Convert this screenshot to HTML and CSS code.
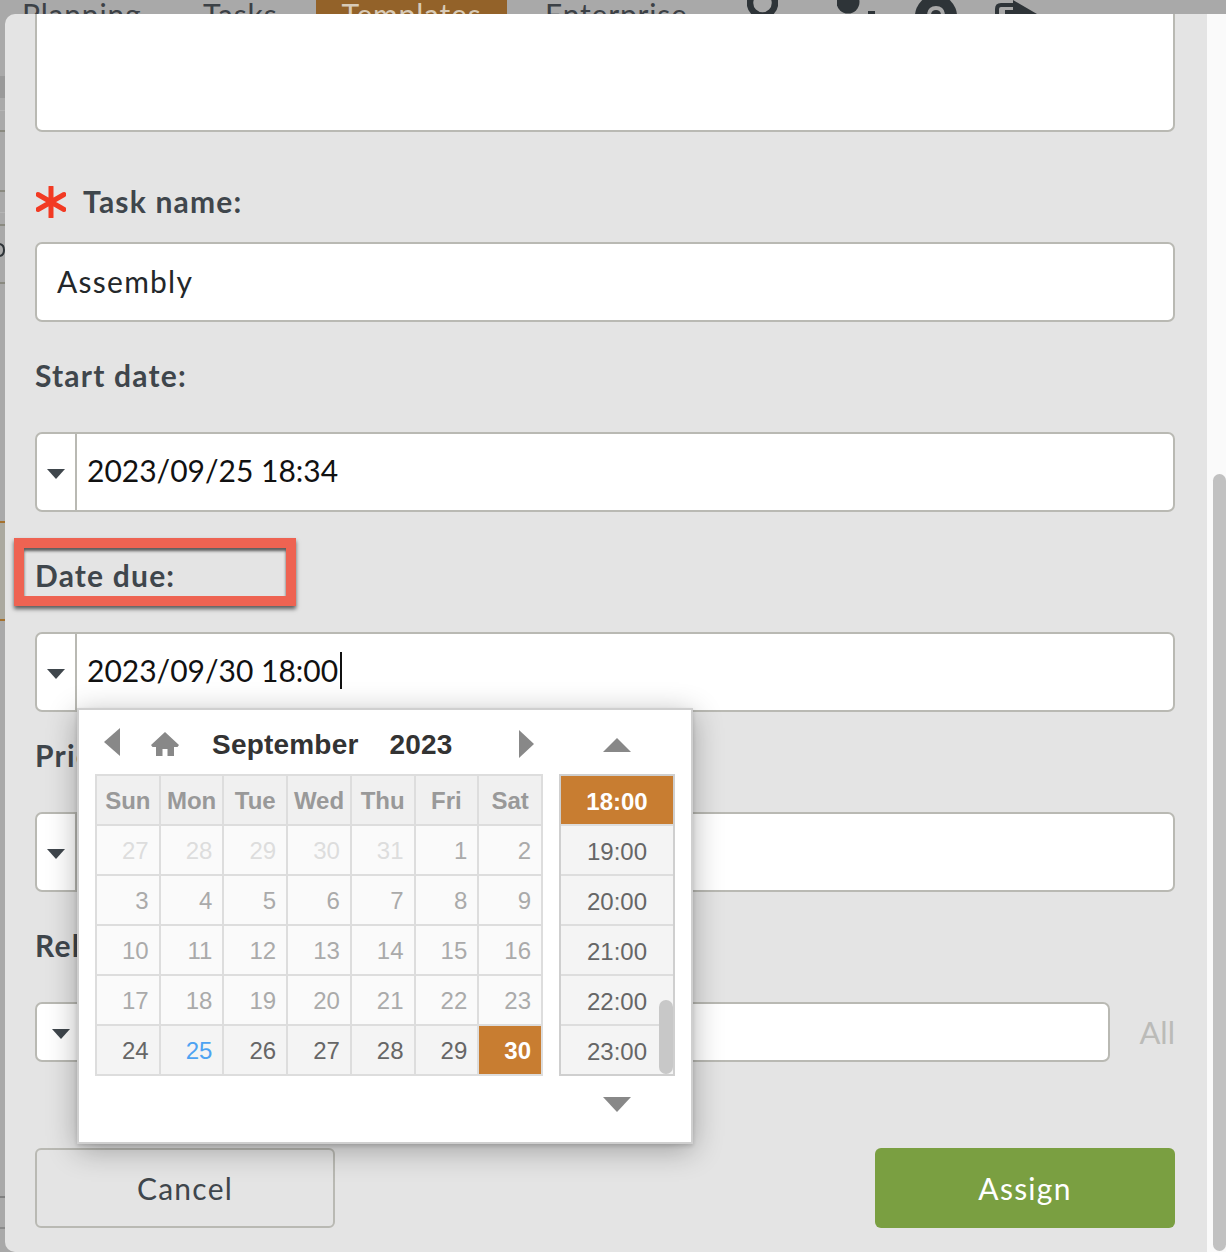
FILE: index.html
```html
<!DOCTYPE html>
<html lang="en">
<head>
    <meta charset="UTF-8">
    <title>Assign task</title>
    <link rel="stylesheet" href="styles.css">
</head>
<body>
    <div class="topbar">
        <a class="nav-item nav-planning">Planning</a>
        <a class="nav-item nav-tasks">Tasks</a>
        <a class="nav-item nav-templates">Templates</a>
        <a class="nav-item nav-enterprise">Enterprise</a>
        <svg class="nav-icon icon-search" width="31" height="14" viewBox="0 0 31 14"><circle cx="15.500" cy="3" r="12.500" fill="none" stroke="#2e3438" stroke-width="6.500"/></svg>
        <svg class="nav-icon icon-user" width="38" height="14" viewBox="0 0 38 14"><circle cx="11" cy="2" r="11.500" fill="#2e3438"/><rect x="31" y="11" width="7" height="3" fill="#2e3438"/></svg>
        <svg class="nav-icon icon-help" width="42" height="14" viewBox="0 0 42 14"><circle cx="21" cy="16" r="21" fill="#2e3438"/><path d="M14 14q1-6 7-6t7 6" fill="none" stroke="#a9a9a9" stroke-width="4"/></svg>
        <svg class="nav-icon icon-share" width="42" height="14" viewBox="0 0 42 14"><path d="M2 14V9q0-4 4-4h12" fill="none" stroke="#2e3438" stroke-width="4"/><path d="M18 0 42 14H10v-4h8z" fill="#2e3438"/></svg>
    </div>

    <div class="stage">
        <svg class="backdrop" width="5" height="1238" viewBox="0 0 5 1238">
            <rect y="62" width="5" height="22" fill="#999"/>
            <rect y="96" width="5" height="1" fill="#b4b4b4"/>
            <rect y="116" width="5" height="2" fill="#8a8a80"/>
            <rect y="176" width="5" height="2" fill="#8a8a80"/>
            <rect y="198" width="5" height="1" fill="#b4b4b4"/>
            <rect y="210" width="5" height="2" fill="#8a8a80"/>
            <path d="M0 230q4 1 4 6t-4 6" fill="none" stroke="#2e3438" stroke-width="2"/>
            <rect y="268" width="5" height="2" fill="#8a8a80"/>
            <rect y="507" width="5" height="99" fill="#aba99f"/>
            <rect y="507" width="5" height="2" fill="#a5712d"/>
            <rect y="605" width="5" height="2" fill="#a5712d"/>
            <rect y="1182" width="5" height="2" fill="#808080"/>
            <rect y="1213" width="5" height="2" fill="#8a8a8a"/>
        </svg>

        <div class="modal">
            <div class="box box-note"></div>

            <div class="label label-task">
                <svg class="required" width="30" height="32" viewBox="0 0 30 32"><path d="M15 1v30M2 8.500l26 15M28 8.500l-26 15" fill="none" stroke="#f23a23" stroke-width="5" stroke-linecap="round"/></svg>
                Task name:
            </div>
            <div class="box box-text">Assembly</div>

            <div class="label label-start">Start date:</div>
            <div class="box box-pick">
                <span class="caret-cell"><span class="caret"></span></span>
                <span class="pick-text">2023/09/25 18:34</span>
            </div>

            <div class="label label-due">Date due:<span class="callout"></span></div>
            <div class="due-wrap">
                <div class="box box-pick">
                    <span class="caret-cell"><span class="caret"></span></span>
                    <span class="pick-text">2023/09/30 18:00<span class="cursor"></span></span>
                </div>

                <div class="datepicker">
                    <div class="dp-calendar">
                        <div class="dp-head">
                            <span class="tri tri-left"></span>
                            <svg class="dp-home" width="28" height="24" viewBox="0 0 28 24"><path d="M14 0 0 13l1.500 2H5v9h6.500v-7h5v7H23v-9h3.500l1.500-2z" fill="#888"/></svg>
                            <span class="dp-month">September</span>
                            <span class="dp-year">2023</span>
                            <span class="tri tri-right"></span>
                        </div>
                        <div class="dp-grid" id="dpGrid"></div>
                    </div>
                    <div class="dp-time">
                        <span class="tri tri-up"></span>
                        <div class="time-list">
                            <div class="time-row time-on">18:00</div>
                            <div class="time-row">19:00</div>
                            <div class="time-row">20:00</div>
                            <div class="time-row">21:00</div>
                            <div class="time-row">22:00</div>
                            <div class="time-row">23:00</div>
                            <span class="time-thumb"></span>
                        </div>
                        <span class="tri tri-down"></span>
                    </div>
                </div>
            </div>

            <div class="label label-priority">Priority:</div>
            <div class="box box-pick">
                <span class="caret-cell"><span class="caret"></span></span>
            </div>

            <div class="label label-start">Related:</div>
            <div class="related-row">
                <div class="box box-short">
                    <span class="caret-cell caret-cell-wide"><span class="caret"></span></span>
                </div>
                <span class="all-link">All</span>
            </div>

            <div class="actions">
                <button class="btn btn-cancel">Cancel</button>
                <button class="btn btn-assign">Assign</button>
            </div>
        </div>

        <div class="page-scroll"><span class="page-thumb"></span></div>
    </div>

    <script src="calendar.js"></script>
</body>
</html>
```

FILE: calendar.js
```js
// Build the September 2023 day grid
const grid = document.getElementById('dpGrid');
const heads = ['Sun', 'Mon', 'Tue', 'Wed', 'Thu', 'Fri', 'Sat'];
const days = [27, 28, 29, 30, 31];
for (let d = 1; d <= 30; d++) days.push(d);

heads.forEach(function (h) {
    const cell = document.createElement('div');
    cell.className = 'dp-cell dp-weekday';
    cell.textContent = h;
    grid.appendChild(cell);
});

days.forEach(function (d, i) {
    const cell = document.createElement('div');
    cell.className = 'dp-cell';
    if (i < 5) cell.classList.add('dp-other');
    else if (i < 28) cell.classList.add('dp-past');
    if (i === 29) cell.classList.add('dp-today');
    if (i === 34) cell.classList.add('dp-selected');
    cell.textContent = d;
    grid.appendChild(cell);
});
```

FILE: styles.css
```css
html, body {
    margin: 0;
    height: 100%;
    overflow: hidden;
}
body {
    font-family: Lato, "Noto Sans", sans-serif;
    background: #a9a9a9;
    color: #3f464c;
}

/* top navigation, mostly hidden by the modal */
.topbar {
    height: 14px;
    overflow: hidden;
    background: #a9a9a9;
    display: flex;
    font-size: 30px;
    line-height: 28px;
    letter-spacing: 0.8px;
    color: #3c4146;
}
.nav-item {
    display: block;
    height: 40px;
}
.nav-planning { margin-left: 22px; width: 181px; }
.nav-tasks { width: 113px; }
.nav-templates {
    width: 191px;
    background: #936229;
    color: #d8cbb8;
    text-align: center;
}
.nav-enterprise { margin-left: 38px; width: 163px; }
.nav-icon { flex-shrink: 0; }
.icon-search { margin-left: 39px; }
.icon-user { margin-left: 59px; }
.icon-help { margin-left: 40px; }
.icon-share { margin-left: 38px; }

.stage {
    display: flex;
    height: 1238px;
}
.backdrop {
    flex-shrink: 0;
}

.modal {
    position: relative;
    box-sizing: border-box;
    width: 1202px;
    padding: 0 32px 0 30px;
    background: #e4e4e4;
    border-radius: 10px 0 0 10px;
}
.box {
    box-sizing: border-box;
    background: #fff;
    border: 2px solid #b9b9b3;
    border-radius: 7px;
}
.box-note {
    height: 118px;
    border-top: 0;
    border-radius: 0 0 7px 7px;
}
.box-text {
    height: 80px;
    padding-left: 20px;
    font-size: 30px;
    letter-spacing: 1.25px;
    line-height: 74px;
    color: #23272a;
}
.box-pick {
    display: flex;
    height: 80px;
}
.box-short {
    display: flex;
    width: 1075px;
    height: 60px;
}
.caret-cell {
    box-sizing: border-box;
    width: 40px;
    flex-shrink: 0;
    border-right: 2px solid #b9b9b3;
    display: flex;
    align-items: center;
    justify-content: center;
}
.caret {
    width: 0;
    height: 0;
    border-left: 9px solid transparent;
    border-right: 9px solid transparent;
    border-top: 10px solid #3f464c;
    margin-top: 3px;
}
.pick-text {
    padding-left: 10px;
    font-size: 30px;
    line-height: 72px;
    color: #111;
}
.cursor {
    display: inline-block;
    width: 2px;
    height: 37px;
    background: #111;
    vertical-align: -7px;
    margin-left: 2px;
}

.label {
    position: relative;
    height: 28px;
    font-size: 30px;
    font-weight: 700;
    letter-spacing: 1.2px;
    line-height: 26px;
    margin-bottom: 42px;
}
.label-task { margin-top: 56px; margin-bottom: 26px; padding-left: 48px; }
.label-start { margin-top: 40px; }
.label-due { margin-top: 50px; }
.label-priority { margin-top: 30px; }
.required {
    position: absolute;
    left: 1px;
    top: -2px;
}
.callout {
    position: absolute;
    left: -21px;
    top: -24px;
    box-sizing: border-box;
    width: 282px;
    height: 68px;
    border: 10px solid #ee6352;
    box-shadow: 0 3px 4px rgba(0, 0, 0, 0.6), inset 0 3px 3px rgba(0, 0, 0, 0.6);
}

.due-wrap {
    position: relative;
}

/* date time popup */
.datepicker {
    position: absolute;
    left: 42px;
    top: 76px;
    z-index: 5;
    box-sizing: border-box;
    width: 616px;
    height: 436px;
    padding: 0 16px;
    display: flex;
    justify-content: space-between;
    background: #fff;
    border: 2px solid #cfcfcf;
    box-shadow: 0 2px 4px rgba(0, 0, 0, 0.15), 0 6px 28px rgba(0, 0, 0, 0.3);
    font-family: "Liberation Sans", Arial, sans-serif;
}
.dp-calendar {
    width: 448px;
}
.dp-head {
    position: relative;
    box-sizing: border-box;
    height: 64px;
    padding-top: 6px;
    display: flex;
    align-items: center;
    font-size: 28px;
    font-weight: 700;
    letter-spacing: 0.2px;
    color: #333;
}
.dp-home {
    margin-left: 31px;
    margin-top: -2px;
}
.dp-month { margin-left: 33px; }
.dp-year { margin-left: 31px; }
.tri {
    display: block;
    width: 0;
    height: 0;
    border-style: solid;
    border-color: transparent;
}
.tri-left {
    margin-left: 9px;
    margin-top: -6px;
    border-width: 14px 16px 14px 0;
    border-right-color: #888;
}
.tri-right {
    position: absolute;
    left: 424px;
    top: 20px;
    border-width: 14px 0 14px 15px;
    border-left-color: #888;
}
.tri-up {
    border-width: 0 14px 14px;
    border-bottom-color: #888;
    margin: 28px auto 22px;
}
.tri-down {
    border-width: 15px 14px 0;
    border-top-color: #888;
    margin: 21px auto 0;
}
.dp-grid {
    display: grid;
    grid-template-columns: repeat(7, 1fr);
    box-sizing: border-box;
    width: 448px;
    border-top: 2px solid #ddd;
    border-left: 2px solid #ddd;
}
.dp-cell {
    box-sizing: border-box;
    height: 50px;
    padding-right: 10px;
    border-right: 2px solid #ddd;
    border-bottom: 2px solid #ddd;
    text-align: right;
    font-size: 24px;
    line-height: 50px;
    background: #f4f4f4;
    color: #666;
}
.dp-weekday {
    padding: 0;
    text-align: center;
    font-weight: 700;
    background: #f0f0f0;
    color: #999;
}
.dp-other { background: #fafafa; color: #ddd; }
.dp-past { background: #fafafa; color: #aaa; }
.dp-today { color: #4ea3f2; }
.dp-selected {
    background: #c87d31;
    color: #fff;
    font-weight: 700;
}
.dp-time {
    width: 116px;
}
.time-list {
    position: relative;
    box-sizing: border-box;
    width: 116px;
    border: 2px solid #cfcfcf;
}
.time-row {
    height: 50px;
    box-sizing: border-box;
    border-bottom: 2px solid #ddd;
    text-align: center;
    font-size: 24px;
    line-height: 52px;
    background: #f4f4f4;
    color: #666;
}
.time-row:last-of-type { border-bottom: 0; height: 48px; }
.time-on {
    background: #c87d31;
    background-clip: padding-box;
    color: #fff;
    font-weight: 700;
}
.time-thumb {
    position: absolute;
    right: 0;
    bottom: 0;
    width: 14px;
    height: 74px;
    border-radius: 7px;
    background: #c8c8c8;
}

.related-row {
    display: flex;
    align-items: center;
    justify-content: space-between;
}
.caret-cell-wide { width: 50px; }
.all-link {
    font-size: 31px;
    color: #bbbbb8;
}

.actions {
    display: flex;
    justify-content: space-between;
    margin-top: 86px;
}
.btn {
    box-sizing: border-box;
    width: 300px;
    height: 80px;
    border-radius: 6px;
    font-family: Lato, "Noto Sans", sans-serif;
    font-size: 30px;
    letter-spacing: 1.25px;
}
.btn-cancel {
    background: transparent;
    border: 2px solid #b9b9b3;
    color: #3f464c;
}
.btn-assign {
    background: #7a9f41;
    border: 0;
    color: #fff;
}

.page-scroll {
    flex: 1;
    position: relative;
    background: #fafafa;
}
.page-thumb {
    position: absolute;
    left: 6px;
    right: 0;
    top: 460px;
    bottom: 1px;
    background: #c1c1c1;
    border-radius: 7px;
}
```
